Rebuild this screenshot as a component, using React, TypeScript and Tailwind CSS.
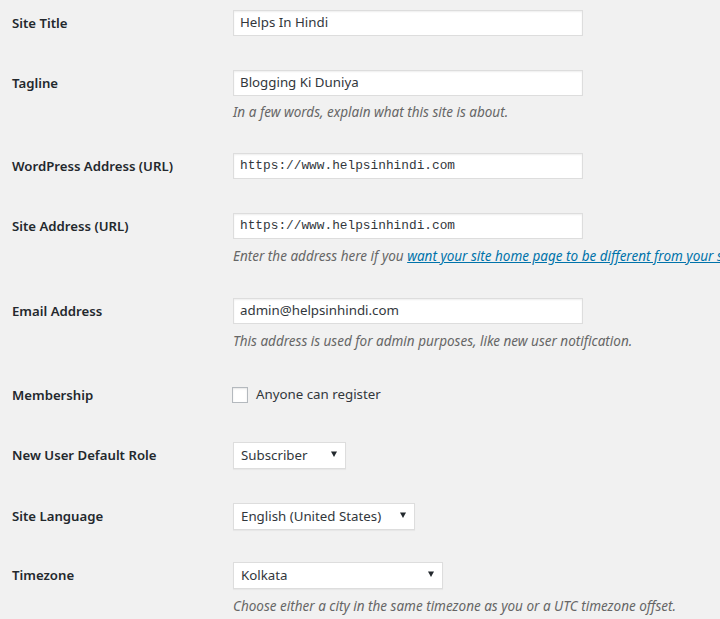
import React from 'react';

const SANS = "font-['Noto_Sans','Open_Sans',sans-serif]";

const Row: React.FC<{ label: string; pt?: string; pb?: string; children: React.ReactNode }> = ({
  label,
  pt = 'pt-[17px]',
  pb = 'pb-[17px]',
  children,
}) => (
  <div className={`flex items-start ${pt} ${pb}`}>
    <div className="w-[233px] shrink-0 pl-3 text-[13.2px] font-semibold leading-[26px] text-[#23282d]">{label}</div>
    <div className="min-w-0 flex-1">{children}</div>
  </div>
);

const TextInput: React.FC<{ value: string; mono?: boolean }> = ({ value, mono }) => (
  <div
    className={`flex h-[26px] w-[350px] items-center border border-[#dddddd] bg-white px-[6px] text-[#32373c] shadow-[inset_0_1px_2px_rgba(0,0,0,0.07)] ${
      mono ? "font-['Liberation_Mono',monospace] text-[12.8px]" : 'text-[13.3px]'
    }`}
  >
    {value}
  </div>
);

const Select: React.FC<{ value: string; width: string }> = ({ value, width }) => (
  <div
    className={`flex h-[27px] ${width} items-center justify-between border border-[#dddddd] bg-white pl-[7px] pr-[8px] text-[13.3px] text-[#32373c] shadow-[0_1px_1px_rgba(0,0,0,0.04)]`}
  >
    <span>{value}</span>
    <svg width="6" height="6" viewBox="0 0 6 6" className="-mt-[3px]">
      <path d="M0 0.5h6L3 6z" fill="#23282d" />
    </svg>
  </div>
);

const Desc: React.FC<{ mt?: string; children: React.ReactNode }> = ({ mt = 'mt-[8px]', children }) => (
  <p className={`${mt} whitespace-nowrap text-[13.5px] italic leading-[18px] text-[#666666]`}>{children}</p>
);

export default function App() {
  return (
    <div className={`min-h-[619px] w-full overflow-hidden bg-[#f1f1f1] ${SANS}`}>
      <Row label="Site Title" pt="pt-[10px]">
        <TextInput value="Helps In Hindi" />
      </Row>
      <Row label="Tagline" pb="pb-[15px]">
        <TextInput value="Blogging Ki Duniya" />
        <Desc mt="mt-[7px]">In a few words, explain what this site is about.</Desc>
      </Row>
      <Row label="WordPress Address (URL)">
        <TextInput value="https://www.helpsinhindi.com" mono />
      </Row>
      <Row label="Site Address (URL)" pb="pb-[16px]">
        <TextInput value="https://www.helpsinhindi.com" mono />
        <Desc>
          Enter the address here if you{' '}
          <a href="#" className="text-[#0073aa] underline">
            want your site home page to be different from your site address
          </a>
          .
        </Desc>
      </Row>
      <Row label="Email Address" pb="pb-[16px]">
        <TextInput value="admin@helpsinhindi.com" />
        <Desc>This address is used for admin purposes, like new user notification.</Desc>
      </Row>
      <Row label="Membership" pt="pt-[16px]">
        <label className="flex h-[26px] items-center text-[13.3px] text-[#32373c]">
          <span className="-ml-px mr-[8px] h-[16px] w-[16px] border border-[#b4b9be] bg-white shadow-[inset_0_1px_2px_rgba(0,0,0,0.1)]" />
          Anyone can register
        </label>
      </Row>
      <Row label="New User Default Role">
        <Select value="Subscriber" width="w-[113px]" />
      </Row>
      <Row label="Site Language" pb="pb-[15px]">
        <Select value="English (United States)" width="w-[182px]" />
      </Row>
      <Row label="Timezone">
        <Select value="Kolkata" width="w-[210px]" />
        <Desc>Choose either a city in the same timezone as you or a UTC timezone offset.</Desc>
      </Row>
    </div>
  );
}
